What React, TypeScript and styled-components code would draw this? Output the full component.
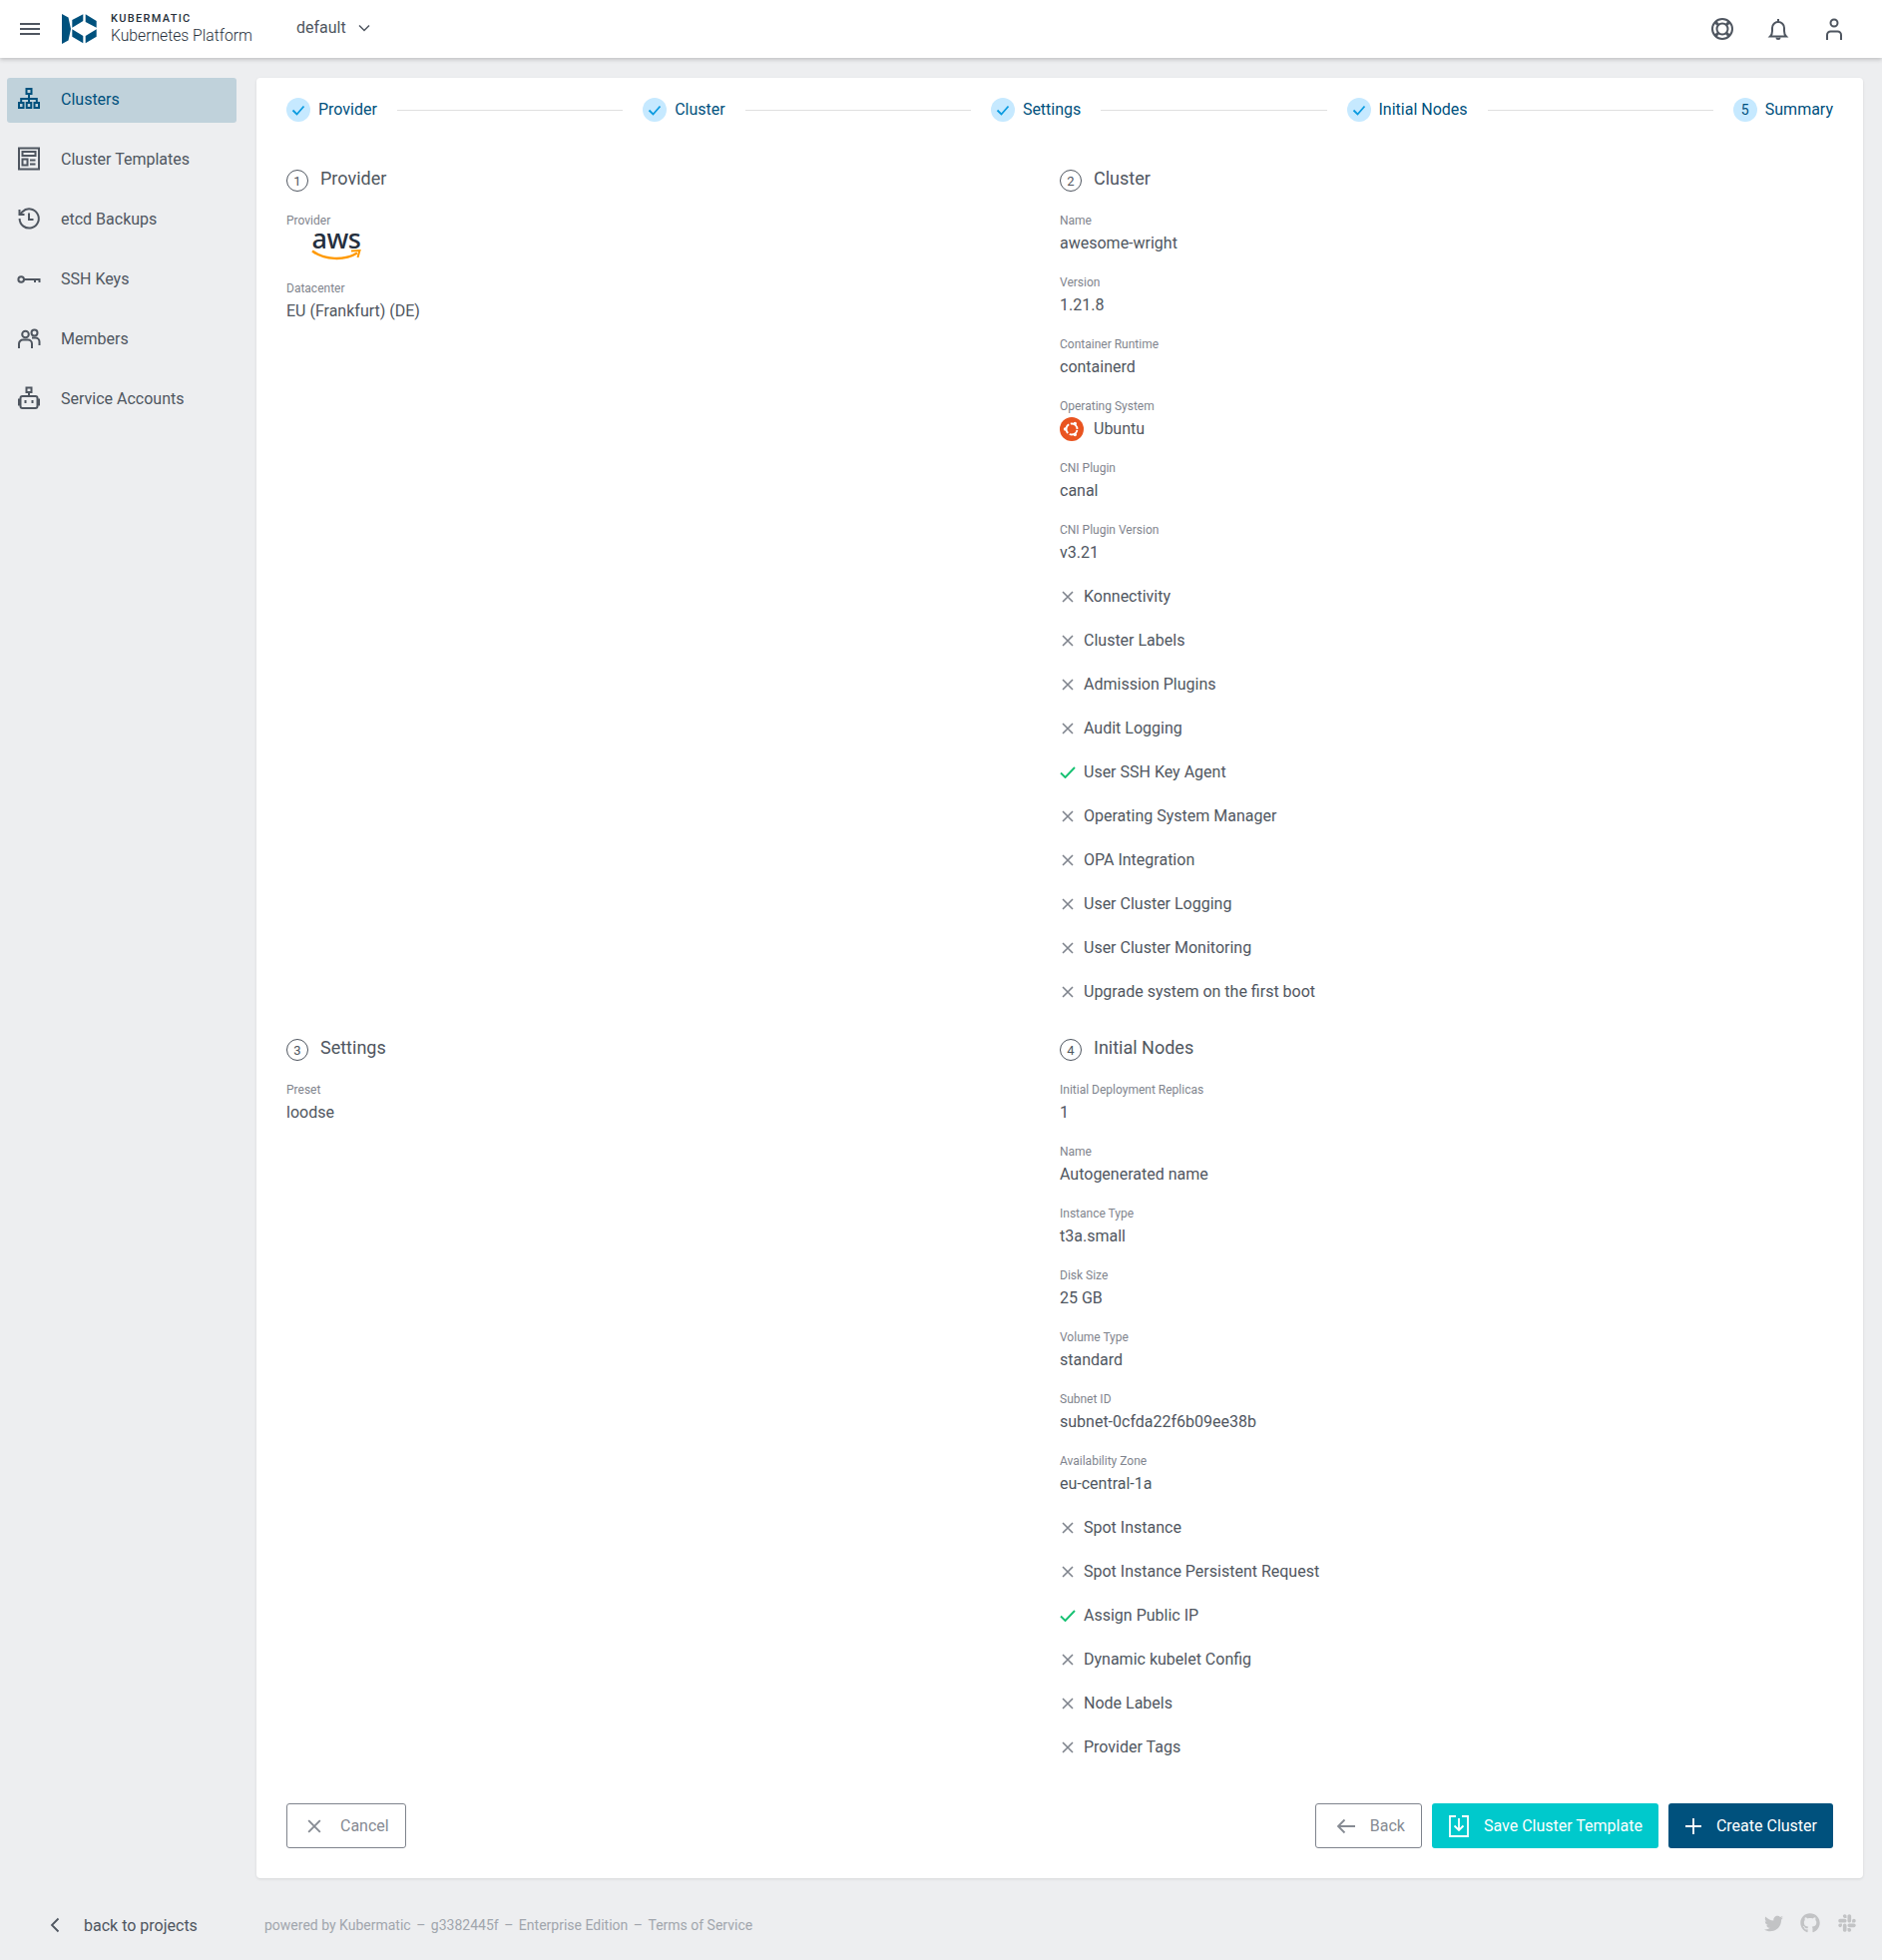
import React from 'react';
import { FaGithub, FaSlack, FaTwitter } from 'react-icons/fa';
import styled, { createGlobalStyle } from 'styled-components';

const BRAND = '#00517d';
const TEXT = '#4f5660';
const MUTED = '#7f848d';

const GlobalStyle = createGlobalStyle`
    html, body {
        margin: 0;
        padding: 0;
        background: #edeef0;
        font-family: Roboto, 'Liberation Sans', sans-serif;
        color: ${TEXT};
    }
`;

type FieldData = { label: string; value: string };
type FlagData = { label: string; enabled?: boolean };

const clusterFields: FieldData[] = [
    { label: 'Name', value: 'awesome-wright' },
    { label: 'Version', value: '1.21.8' },
    { label: 'Container Runtime', value: 'containerd' },
];

const cniFields: FieldData[] = [
    { label: 'CNI Plugin', value: 'canal' },
    { label: 'CNI Plugin Version', value: 'v3.21' },
];

const clusterFlags: FlagData[] = [
    { label: 'Konnectivity' },
    { label: 'Cluster Labels' },
    { label: 'Admission Plugins' },
    { label: 'Audit Logging' },
    { label: 'User SSH Key Agent', enabled: true },
    { label: 'Operating System Manager' },
    { label: 'OPA Integration' },
    { label: 'User Cluster Logging' },
    { label: 'User Cluster Monitoring' },
    { label: 'Upgrade system on the first boot' },
];

const nodeFields: FieldData[] = [
    { label: 'Initial Deployment Replicas', value: '1' },
    { label: 'Name', value: 'Autogenerated name' },
    { label: 'Instance Type', value: 't3a.small' },
    { label: 'Disk Size', value: '25 GB' },
    { label: 'Volume Type', value: 'standard' },
    { label: 'Subnet ID', value: 'subnet-0cfda22f6b09ee38b' },
    { label: 'Availability Zone', value: 'eu-central-1a' },
];

const nodeFlags: FlagData[] = [
    { label: 'Spot Instance' },
    { label: 'Spot Instance Persistent Request' },
    { label: 'Assign Public IP', enabled: true },
    { label: 'Dynamic kubelet Config' },
    { label: 'Node Labels' },
    { label: 'Provider Tags' },
];

const Logo = () => (
    <svg width="35" height="30" viewBox="0 0 35 30" fill={BRAND}>
        <polygon points="0,0 6.5,3.5 9,15 6.5,26.5 0,30" />
        <polygon points="10.3,6 21.3,0.3 21.3,7 10.3,13.7" />
        <polygon points="23.7,0.3 34.7,7 34.7,13.7 23.7,8" />
        <polygon points="23.7,22 34.7,15.3 34.7,22.7 23.7,29.3" />
        <polygon points="10.3,15.3 21.3,22 21.3,29.3 10.3,22.7" />
    </svg>
);

const AwsLogo = () => (
    <svg width="50" height="30" viewBox="0 0 50 30" fill="none" overflow="visible">
        <text x="25" y="17" textAnchor="middle" fontFamily="'Noto Sans', sans-serif" fontSize="27" fontWeight="500" letterSpacing="-0.5" fill="#252f3e">
            aws
        </text>
        <path d="M1 19.5c12 9 32 10 45 2" stroke="#f90" strokeWidth="2.4" />
        <path d="M40 19.5l8.5-.5-2 7" stroke="#f90" strokeWidth="2" />
    </svg>
);

const ClustersIcon = () => (
    <svg width="24" height="24" viewBox="0 0 24 24" fill="none" stroke="currentColor" strokeWidth="2">
        <rect x="9.5" y="2" width="5" height="5" />
        <rect x="2" y="16" width="4.5" height="5" />
        <rect x="9.75" y="16" width="4.5" height="5" />
        <rect x="17.5" y="16" width="4.5" height="5" />
        <path d="M12 7v9M4.2 16v-4h15.6v4" />
    </svg>
);

const TemplatesIcon = () => (
    <svg width="24" height="24" viewBox="0 0 24 24" fill="none" stroke="currentColor" strokeWidth="2">
        <rect x="2" y="1.5" width="20" height="21" />
        <rect x="5.5" y="5" width="13" height="4" />
        <rect x="5.5" y="12.5" width="5" height="6" />
        <path d="M13 13.5h5.5M13 17.5h5.5" />
    </svg>
);

const HistoryIcon = () => (
    <svg width="24" height="24" viewBox="0 0 24 24" fill="none" stroke="currentColor" strokeWidth="2">
        <path d="M2.6 12a9.6 9.6 0 1 0 2.8-6.8L2.5 8" />
        <path d="M2.5 3v5h5" />
        <path d="M12 6.5V13h4.5" />
    </svg>
);

const KeyIcon = () => (
    <svg width="24" height="24" viewBox="0 0 24 24" fill="none" stroke="currentColor" strokeWidth="2">
        <circle cx="4.2" cy="13" r="2.8" />
        <path d="M7 13h16.5M18 13v3M22.5 13v3" />
    </svg>
);

const MembersIcon = () => (
    <svg width="24" height="24" viewBox="0 0 24 24" fill="none" stroke="currentColor" strokeWidth="2">
        <circle cx="8.5" cy="8" r="3.3" />
        <circle cx="17.5" cy="6.5" r="3" />
        <path d="M2 22v-4.5a4 4 0 0 1 4-4h5a4 4 0 0 1 4 4V22" />
        <path d="M15 11.5h3.5a4 4 0 0 1 4 4V19" />
    </svg>
);

const RobotIcon = () => (
    <svg width="24" height="24" viewBox="0 0 24 24" fill="none" stroke="currentColor" strokeWidth="2">
        <rect x="9.5" y="1.5" width="5" height="4.5" />
        <path d="M12 6v4" />
        <rect x="3.5" y="10" width="17" height="12" rx="2" />
        <path d="M3.5 13.5H2v5h1.5M20.5 13.5H22v5h-1.5" />
        <path d="M7.5 15.5h2M14.5 15.5h2" strokeWidth="3" />
    </svg>
);

const navItems = [
    { label: 'Clusters', icon: <ClustersIcon />, active: true },
    { label: 'Cluster Templates', icon: <TemplatesIcon /> },
    { label: 'etcd Backups', icon: <HistoryIcon /> },
    { label: 'SSH Keys', icon: <KeyIcon /> },
    { label: 'Members', icon: <MembersIcon /> },
    { label: 'Service Accounts', icon: <RobotIcon /> },
];

const steps = [
    { label: 'Provider', done: true },
    { label: 'Cluster', done: true },
    { label: 'Settings', done: true },
    { label: 'Initial Nodes', done: true },
    { label: 'Summary', done: false },
];

const CrossIcon = ({ size = 12 }: { size?: number }) => (
    <svg width={size} height={size} viewBox="0 0 12 12" fill="none" stroke="currentColor" strokeWidth="1.6">
        <path d="M1 1l10 10M11 1L1 11" />
    </svg>
);

const CheckIcon = () => (
    <svg width="16" height="12" viewBox="0 0 16 12" fill="none" stroke="#16c172" strokeWidth="1.9">
        <path d="M1 6.5L5.5 11 15 1" />
    </svg>
);

const Field = ({ label, value }: FieldData) => (
    <FieldBox>
        <FieldLabel>{label}</FieldLabel>
        <FieldValue>{value}</FieldValue>
    </FieldBox>
);

const Flag = ({ label, enabled }: FlagData) => (
    <FlagRow>
        <FlagIcon>{enabled ? <CheckIcon /> : <CrossIcon />}</FlagIcon>
        {label}
    </FlagRow>
);

const SectionTitle = ({ index, title }: { index: number; title: string }) => (
    <TitleRow>
        <TitleIndex>{index}</TitleIndex>
        <TitleText>{title}</TitleText>
    </TitleRow>
);

const App: React.FC = () => (
    <>
        <GlobalStyle />
        <Toolbar>
            <MenuButton>
                <span />
                <span />
                <span />
            </MenuButton>
            <Logo />
            <Brand>
                <BrandName>KUBERMATIC</BrandName>
                <BrandProduct>Kubernetes Platform</BrandProduct>
            </Brand>
            <ProjectSelect>
                default
                <svg width="12" height="8" viewBox="0 0 12 8" fill="none" stroke={TEXT} strokeWidth="1.5">
                    <path d="M1 1.5l5 5 5-5" />
                </svg>
            </ProjectSelect>
            <ToolbarActions>
                <svg width="24" height="24" viewBox="0 0 24 24" fill="none" stroke={TEXT} strokeWidth="2">
                    <circle cx="12" cy="12" r="10" />
                    <circle cx="12" cy="12" r="5.5" />
                    <path d="M5 5l3 3M19 5l-3 3M5 19l3-3M19 19l-3-3" strokeWidth="3" />
                </svg>
                <svg width="24" height="24" viewBox="0 0 24 24" fill="none" stroke={TEXT} strokeWidth="2">
                    <path d="M4 19.5c1.5-1.5 2-3 2-5.5v-3a6 6 0 0 1 12 0v3c0 2.5.5 4 2 5.5z" />
                    <path d="M12 2v3M10.5 20.5a1.5 1.5 0 0 0 3 0" />
                </svg>
                <svg width="24" height="24" viewBox="0 0 24 24" fill="none" stroke={TEXT} strokeWidth="2">
                    <circle cx="12" cy="6" r="3.5" />
                    <path d="M5 23v-5a3.5 3.5 0 0 1 3.5-3.5h7A3.5 3.5 0 0 1 19 18v5" />
                </svg>
            </ToolbarActions>
        </Toolbar>
        <Main>
            <Sidebar>
                {navItems.map((item) => (
                    <NavItem key={item.label} active={item.active}>
                        <NavIcon>{item.icon}</NavIcon>
                        {item.label}
                    </NavItem>
                ))}
            </Sidebar>
            <Card>
                <Stepper>
                    {steps.map((step, i) => (
                        <React.Fragment key={step.label}>
                            {i > 0 && <StepLine />}
                            <Step>
                                <StepBadge>
                                    {step.done ? (
                                        <svg width="14" height="11" viewBox="0 0 14 11" fill="none" stroke="#0a9be0" strokeWidth="1.8">
                                            <path d="M1.5 5.5L5.5 9.5 12.5 1.5" />
                                        </svg>
                                    ) : (
                                        i + 1
                                    )}
                                </StepBadge>
                                <StepLabel>{step.label}</StepLabel>
                            </Step>
                        </React.Fragment>
                    ))}
                </Stepper>
                <Summary>
                    <section>
                        <SectionTitle index={1} title="Provider" />
                        <FieldBox>
                            <FieldLabel>Provider</FieldLabel>
                            <AwsBox>
                                <AwsLogo />
                            </AwsBox>
                        </FieldBox>
                        <Field label="Datacenter" value="EU (Frankfurt) (DE)" />
                    </section>
                    <section>
                        <SectionTitle index={2} title="Cluster" />
                        {clusterFields.map((f) => (
                            <Field key={f.label} {...f} />
                        ))}
                        <FieldBox>
                            <FieldLabel>Operating System</FieldLabel>
                            <FieldValue>
                                <OsRow>
                                    <svg width="24" height="24" viewBox="0 0 24 24">
                                        <circle cx="12" cy="12" r="12" fill="#e95420" />
                                        <circle cx="12" cy="12" r="5.5" fill="none" stroke="#fff" strokeWidth="1.8" strokeDasharray="9.8 1.7" strokeDashoffset="-1" />
                                        <circle cx="5.5" cy="12" r="1.7" fill="#fff" />
                                        <circle cx="15.3" cy="6.4" r="1.7" fill="#fff" />
                                        <circle cx="15.3" cy="17.6" r="1.7" fill="#fff" />
                                    </svg>
                                    Ubuntu
                                </OsRow>
                            </FieldValue>
                        </FieldBox>
                        {cniFields.map((f) => (
                            <Field key={f.label} {...f} />
                        ))}
                        <FlagList>
                            {clusterFlags.map((f) => (
                                <Flag key={f.label} {...f} />
                            ))}
                        </FlagList>
                    </section>
                    <section>
                        <SectionTitle index={3} title="Settings" />
                        <Field label="Preset" value="loodse" />
                    </section>
                    <section>
                        <SectionTitle index={4} title="Initial Nodes" />
                        {nodeFields.map((f) => (
                            <Field key={f.label} {...f} />
                        ))}
                        <FlagList>
                            {nodeFlags.map((f) => (
                                <Flag key={f.label} {...f} />
                            ))}
                        </FlagList>
                    </section>
                </Summary>
                <Actions>
                    <OutlineButton gap={19}>
                        <CrossIcon size={14} />
                        <span>Cancel</span>
                    </OutlineButton>
                    <ActionsRight>
                        <OutlineButton gap={14}>
                            <svg width="20" height="16" viewBox="0 0 20 16" fill="none" stroke="currentColor" strokeWidth="1.8">
                                <path d="M19 8H2M8.5 1.5L2 8l6.5 6.5" />
                            </svg>
                            <span>Back</span>
                        </OutlineButton>
                        <SolidButton color="#00c9cc">
                            <svg width="20" height="22" viewBox="0 0 20 22" fill="none" stroke="#fff" strokeWidth="1.8">
                                <path d="M7 1H1v20h18V1h-6" />
                                <path d="M10 3v12M5.5 10.5L10 15l4.5-4.5" />
                            </svg>
                            <span>Save Cluster Template</span>
                        </SolidButton>
                        <SolidButton color={BRAND}>
                            <svg width="16" height="16" viewBox="0 0 16 16" fill="none" stroke="#fff" strokeWidth="1.8">
                                <path d="M8 0v16M0 8h16" />
                            </svg>
                            <span>Create Cluster</span>
                        </SolidButton>
                    </ActionsRight>
                </Actions>
            </Card>
        </Main>
        <Footer>
            <BackLink>
                <svg width="10" height="16" viewBox="0 0 10 16" fill="none" stroke={TEXT} strokeWidth="1.8">
                    <path d="M8.5 1.5L2 8l6.5 6.5" />
                </svg>
                back to projects
            </BackLink>
            <FooterLinks>
                <span>powered by Kubermatic</span>
                <span>–</span>
                <span>g3382445f</span>
                <span>–</span>
                <span>Enterprise Edition</span>
                <span>–</span>
                <span>Terms of Service</span>
            </FooterLinks>
            <Social>
                <FaTwitter size={19} />
                <FaGithub size={20} />
                <FaSlack size={20} />
            </Social>
        </Footer>
    </>
);

const Toolbar = styled.header`
    display: flex;
    align-items: center;
    height: 58px;
    padding: 0 20px;
    background: #fff;
    box-shadow: 0 2px 4px rgba(0, 0, 0, 0.18);
    position: relative;
`;

const MenuButton = styled.div`
    display: flex;
    flex-direction: column;
    gap: 3px;
    width: 20px;
    margin-right: 22px;

    span {
        height: 2px;
        background: ${TEXT};
    }
`;

const Brand = styled.div`
    display: flex;
    flex-direction: column;
    margin-left: 14px;
    margin-right: 45px;
    width: 141px;
`;

const BrandName = styled.div`
    font-size: 11px;
    font-weight: 500;
    line-height: 13px;
    letter-spacing: 1.3px;
    color: #27313b;
`;

const BrandProduct = styled.div`
    font-size: 15.7px;
    font-weight: 300;
    line-height: 22px;
    color: #27313b;
    white-space: nowrap;
`;

const ProjectSelect = styled.div`
    display: flex;
    align-items: center;
    gap: 12px;
    font-size: 16px;
    margin-top: -3px;
`;

const ToolbarActions = styled.div`
    display: flex;
    gap: 32px;
    margin-left: auto;
    margin-right: 16px;
`;

const Main = styled.main`
    display: flex;
    align-items: flex-start;
    padding: 20px 19px 0 7px;
`;

const Sidebar = styled.nav`
    display: flex;
    flex-direction: column;
    gap: 15px;
    width: 230px;
    margin-right: 20px;
    flex-shrink: 0;
`;

const NavItem = styled.div<{ active?: boolean }>`
    display: flex;
    align-items: center;
    height: 45px;
    padding-left: 10px;
    padding-bottom: 3px;
    box-sizing: border-box;
    border-radius: 3px;
    font-size: 16px;
    color: ${(props) => (props.active ? BRAND : TEXT)};
    background: ${(props) => (props.active ? '#c0d2db' : 'transparent')};
`;

const NavIcon = styled.span`
    display: flex;
    width: 24px;
    margin-right: 20px;
`;

const Card = styled.div`
    flex: 1;
    height: 1804px;
    box-sizing: border-box;
    padding: 20px 30px 30px;
    display: flex;
    flex-direction: column;
    background: #fff;
    border-radius: 4px;
    box-shadow: 0 1px 3px rgba(0, 0, 0, 0.1);
`;

const Stepper = styled.div`
    display: flex;
    align-items: center;
    height: 24px;
    margin-bottom: 48px;
`;

const Step = styled.div`
    display: flex;
    align-items: center;
    gap: 8px;
    font-size: 16px;
    color: ${BRAND};
    white-space: nowrap;
`;

const StepLabel = styled.span`
    margin-top: -2px;
`;

const StepBadge = styled.span`
    display: flex;
    align-items: center;
    justify-content: center;
    width: 24px;
    height: 24px;
    border-radius: 50%;
    background: #c6e9ff;
    font-size: 14px;
`;

const StepLine = styled.div`
    flex: 1;
    height: 1px;
    margin: 1px 20px 0;
    background: #e0e0e0;
`;

const Summary = styled.div`
    display: grid;
    grid-template-columns: 1fr 1fr;
    grid-template-rows: auto auto;
    row-gap: 15px;
    flex: 1;
    align-content: start;
`;

const TitleRow = styled.div`
    display: flex;
    align-items: flex-start;
    height: 22px;
    margin-bottom: 21px;
`;

const TitleIndex = styled.span`
    display: flex;
    align-items: center;
    justify-content: center;
    width: 22px;
    height: 22px;
    box-sizing: border-box;
    border: 1px solid ${TEXT};
    border-radius: 50%;
    font-size: 13px;
    margin-right: 12px;
`;

const TitleText = styled.span`
    font-size: 18px;
    line-height: 18px;
`;

const FieldBox = styled.div`
    margin-bottom: 19px;
`;

const FieldLabel = styled.div`
    font-size: 12px;
    line-height: 16px;
    margin-bottom: 3px;
    color: ${MUTED};
`;

const FieldValue = styled.div`
    font-size: 16px;
    line-height: 24px;
`;

const OsRow = styled.div`
    display: flex;
    align-items: center;
    gap: 10px;
`;

const AwsBox = styled.div`
    display: flex;
    height: 30px;
    margin-left: 25px;
`;

const FlagList = styled.div`
    display: flex;
    flex-direction: column;
    gap: 20px;
    margin: 20px 0;
`;

const FlagRow = styled.div`
    display: flex;
    align-items: center;
    font-size: 16px;
    line-height: 24px;
`;

const FlagIcon = styled.span`
    display: flex;
    justify-content: center;
    width: 16px;
    margin-right: 8px;
    color: ${MUTED};
`;

const Actions = styled.div`
    display: flex;
    justify-content: space-between;
`;

const ActionsRight = styled.div`
    display: flex;
    gap: 10px;
`;

const ButtonBase = styled.button`
    display: flex;
    align-items: center;
    height: 45px;
    box-sizing: border-box;
    border-radius: 3px;
    font-family: inherit;
    font-size: 16px;
    cursor: pointer;
`;

const OutlineButton = styled(ButtonBase)<{ gap: number }>`
    gap: ${(props) => props.gap}px;
    padding: 0 16px 0 20px;
    border: 1px solid ${MUTED};
    background: #fff;
    color: #868b93;
`;

const SolidButton = styled(ButtonBase)<{ color: string }>`
    gap: 15px;
    padding: 0 16px 0 17px;
    border: none;
    background: ${(props) => props.color};
    color: #fff;
`;

const Footer = styled.footer`
    display: flex;
    align-items: center;
    height: 82px;
    box-sizing: border-box;
    padding: 12px 25px 0 50px;
`;

const BackLink = styled.div`
    display: flex;
    align-items: center;
    gap: 24px;
    font-size: 16px;
    width: 215px;
`;

const FooterLinks = styled.div`
    display: flex;
    gap: 5.5px;
    font-size: 14px;
    color: #a1a6ad;
`;

const Social = styled.div`
    display: flex;
    align-items: center;
    gap: 17px;
    margin-left: auto;
    margin-top: -4px;
    color: #c2c3c5;
`;

export default App;
